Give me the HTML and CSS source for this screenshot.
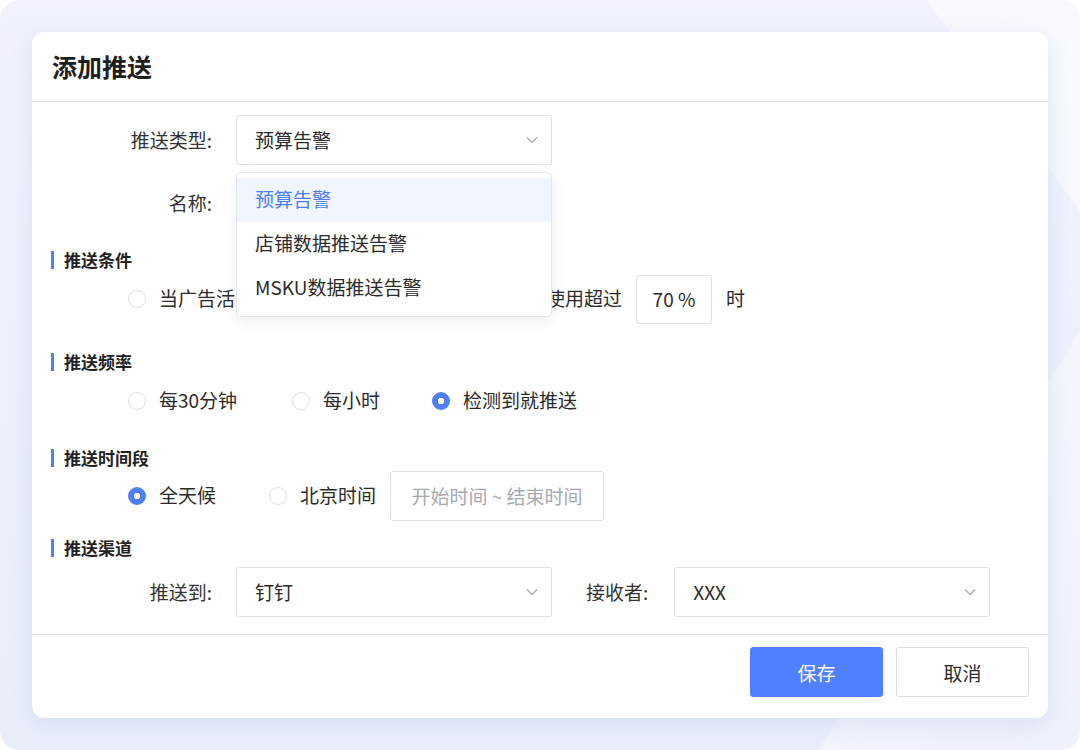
FILE: index.html
```html
<!DOCTYPE html>
<html lang="zh-CN">
<head>
<meta charset="utf-8">
<title>添加推送</title>
<link rel="stylesheet" href="styles.css">
</head>
<body>
<div class="stage">
  <div class="card">
    <div class="card-header">添加推送</div>
    <div class="card-body">
      <div class="form-row mt-13">
        <span class="label">推送类型:</span>
        <div class="select-wrap">
          <div class="select"><span class="txt">预算告警</span>
            <svg class="chev" width="12" height="8" viewBox="0 0 12 8"><path d="M1 1.5 L6 6.5 L11 1.5" fill="none" stroke="#a8abb2" stroke-width="1.3"/></svg>
          </div>
          <ul class="dropdown">
            <li class="active">预算告警</li>
            <li>店铺数据推送告警</li>
            <li>MSKU数据推送告警</li>
          </ul>
        </div>
      </div>
      <div class="form-row mt-13">
        <span class="label">名称:</span>
        <div class="input name-input"></div>
      </div>

      <div class="section-title mt-20">推送条件</div>
      <div class="radio-row mt-2">
        <span class="radio"></span><span class="radio-text">当广告活动</span>
        <div class="spacer"></div>
        <span class="radio-text">预算使用超过</span>
        <div class="input pct"><span class="txt">70 %</span></div>
        <span class="radio-text">时</span>
      </div>

      <div class="section-title mt-26">推送频率</div>
      <div class="radio-row mt-2">
        <label class="radio-item"><span class="radio"></span><span class="radio-text">每30分钟</span></label>
        <label class="radio-item narrow"><span class="radio"></span><span class="radio-text">每小时</span></label>
        <label class="radio-item"><span class="radio checked"></span><span class="radio-text">检测到就推送</span></label>
      </div>

      <div class="section-title mt-20">推送时间段</div>
      <div class="radio-row mt-1">
        <label class="radio-item wide"><span class="radio checked"></span><span class="radio-text">全天候</span></label>
        <label class="radio-item tight"><span class="radio"></span><span class="radio-text">北京时间</span></label>
        <div class="input range"><span class="txt">开始时间 ~ 结束时间</span></div>
      </div>

      <div class="section-title mt-15">推送渠道</div>
      <div class="form-row mt-7">
        <span class="label">推送到:</span>
        <div class="select"><span class="txt">钉钉</span>
          <svg class="chev" width="12" height="8" viewBox="0 0 12 8"><path d="M1 1.5 L6 6.5 L11 1.5" fill="none" stroke="#a8abb2" stroke-width="1.3"/></svg>
        </div>
        <span class="label2">接收者:</span>
        <div class="select"><span class="txt">XXX</span>
          <svg class="chev" width="12" height="8" viewBox="0 0 12 8"><path d="M1 1.5 L6 6.5 L11 1.5" fill="none" stroke="#a8abb2" stroke-width="1.3"/></svg>
        </div>
      </div>
    </div>
    <div class="card-footer">
      <button class="btn primary"><span class="txt">保存</span></button>
      <button class="btn"><span class="txt">取消</span></button>
    </div>
  </div>
</div>
</body>
</html>
```

FILE: styles.css
```css
* { box-sizing: border-box; }
html, body { margin: 0; padding: 0; background: #ffffff; }
body {
  font-family: "Noto Sans CJK SC", "Noto Sans", sans-serif;
  color: #2b2b2b;
}
.stage {
  width: 1080px;
  height: 750px;
  border-radius: 20px;
  background:
    linear-gradient(54deg, rgba(255,255,255,0) 0%, rgba(255,255,255,0) 90.5%, rgba(255,255,255,0.5) 90.6%, rgba(255,255,255,0.6) 100%),
    linear-gradient(122deg, rgba(255,255,255,0) 0%, rgba(255,255,255,0) 83%, rgba(255,255,255,0.4) 83.2%, rgba(255,255,255,0.2) 100%),
    linear-gradient(180deg, #f0f3fd 0%, #eaeefb 100%);
  padding: 32px;
  overflow: hidden;
}
.card {
  width: 1016px;
  height: 686px;
  background: #fff;
  border-radius: 12px;
  box-shadow: 0 6px 24px rgba(90, 110, 190, 0.14);
  display: flex;
  flex-direction: column;
}
.card-header {
  height: 70px;
  border-bottom: 1px solid #e4e6eb;
  padding-left: 20px;
  display: flex;
  align-items: center;
  font-size: 25px;
  font-weight: 700;
  color: #1f1f1f;
  padding-bottom: 2px;
}
.card-body {
  flex: 1;
  position: relative;
}
.mt-1 { margin-top: 1px; }
.mt-2 { margin-top: 2px; }
.mt-7 { margin-top: 7px; }
.mt-13 { margin-top: 13px; }
.mt-15 { margin-top: 15px; }
.mt-20 { margin-top: 20px; }
.mt-26 { margin-top: 26px; }

.txt { padding-bottom: 2px; }

.form-row {
  display: flex;
  align-items: center;
  height: 50px;
  font-size: 19px;
}
.label {
  width: 180px;
  text-align: right;
  margin-right: 24px;
  padding-bottom: 2px;
  color: #333;
}
.label2 {
  margin-left: 34px;
  margin-right: 26px;
  padding-bottom: 2px;
  color: #333;
}
.select-wrap { position: relative; }
.select, .input {
  height: 50px;
  border: 1px solid #dfe1e6;
  border-radius: 3px;
  background: #fff;
}
.select {
  width: 316px;
  display: flex;
  align-items: center;
  justify-content: space-between;
  padding: 0 13px 0 18px;
  font-size: 19px;
}
.chev { display: block; }
.name-input { width: 316px; }

.dropdown {
  position: absolute;
  top: 57px;
  left: 0;
  width: 316px;
  margin: 0;
  padding: 5px 0 6px;
  list-style: none;
  background: #fff;
  border: 1px solid #e4e7ed;
  border-radius: 5px;
  box-shadow: 0 4px 14px rgba(0, 0, 0, 0.08);
  z-index: 10;
}
.dropdown li {
  height: 44px;
  display: flex;
  align-items: center;
  padding-left: 18px;
  padding-bottom: 3px;
  font-size: 19px;
}
.dropdown li.active {
  background: #f1f5fe;
  color: #4c7ff7;
}

.section-title {
  height: 24px;
  margin-left: 19px;
  padding-left: 10px;
  border-left: 3px solid #4f80fa;
  display: flex;
  align-items: center;
  font-size: 17px;
  font-weight: 700;
  color: #222;
  line-height: 18px;
  border-image: linear-gradient(#fff 0 15%, #4f80fa 15% 85%, #fff 85% 100%) 1;
}
.radio-row {
  display: flex;
  align-items: center;
  height: 50px;
  padding-left: 96px;
  font-size: 19px;
}
.radio-item {
  display: flex;
  align-items: center;
  margin-right: 55px;
}
.radio-item.narrow { margin-right: 52px; }
.radio-item.wide { margin-right: 53px; }
.radio-item.tight { margin-right: 14px; }
.radio {
  width: 18px;
  height: 18px;
  border-radius: 50%;
  border: 1px solid #dcdfe6;
  background: #fff;
  margin-right: 13px;
  flex: none;
}
.radio.checked {
  border: none;
  background: radial-gradient(circle, #fff 0 3px, #4f80fa 3.5px);
}
.radio-text { white-space: nowrap; padding-bottom: 3px; }
.spacer { width: 254px; }
.input.pct {
  width: 76px;
  height: 49px;
  margin: 0 14px;
  display: flex;
  align-items: center;
  justify-content: center;
  font-size: 19px;
}
.input.range {
  width: 214px;
  height: 50px;
  display: flex;
  align-items: center;
  justify-content: center;
  color: #a6a9b0;
  font-size: 19px;
}

.card-footer {
  height: 84px;
  border-top: 1px solid #e4e6eb;
  display: flex;
  justify-content: flex-end;
  align-items: flex-start;
  padding: 12px 19px 0 0;
  gap: 13px;
}
.btn {
  width: 133px;
  height: 50px;
  border-radius: 3px;
  border: 1px solid #dcdfe6;
  background: #fff;
  font-family: inherit;
  font-size: 19px;
  color: #2b2b2b;
}
.btn.primary {
  background: #4f80ff;
  border-color: #4f80ff;
  color: #fff;
}
```
